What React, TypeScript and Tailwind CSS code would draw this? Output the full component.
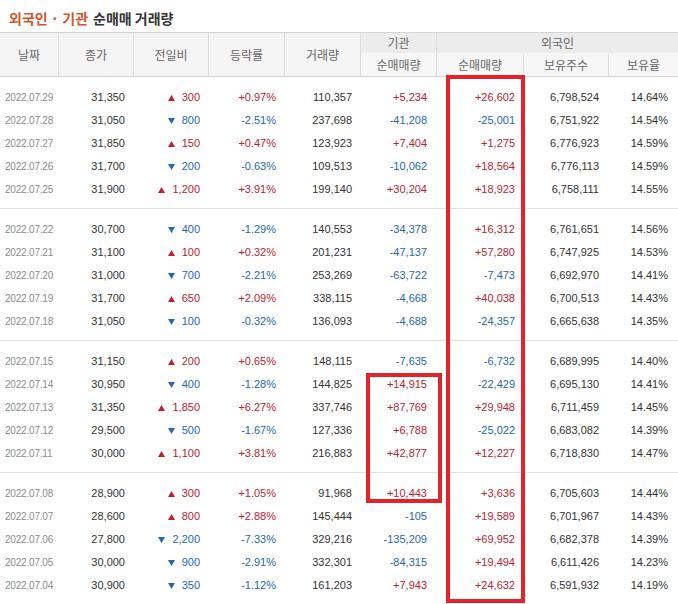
import React from "react";

type Row = [string, string, "u" | "d", string, string, string, string, string, string, string];

const groups: Row[][] = [
  [
    ["2022.07.29", "31,350", "u", "300", "+0.97%", "110,357", "+5,234", "+26,602", "6,798,524", "14.64%"],
    ["2022.07.28", "31,050", "d", "800", "-2.51%", "237,698", "-41,208", "-25,001", "6,751,922", "14.54%"],
    ["2022.07.27", "31,850", "u", "150", "+0.47%", "123,923", "+7,404", "+1,275", "6,776,923", "14.59%"],
    ["2022.07.26", "31,700", "d", "200", "-0.63%", "109,513", "-10,062", "+18,564", "6,776,113", "14.59%"],
    ["2022.07.25", "31,900", "u", "1,200", "+3.91%", "199,140", "+30,204", "+18,923", "6,758,111", "14.55%"],
  ],
  [
    ["2022.07.22", "30,700", "d", "400", "-1.29%", "140,553", "-34,378", "+16,312", "6,761,651", "14.56%"],
    ["2022.07.21", "31,100", "u", "100", "+0.32%", "201,231", "-47,137", "+57,280", "6,747,925", "14.53%"],
    ["2022.07.20", "31,000", "d", "700", "-2.21%", "253,269", "-63,722", "-7,473", "6,692,970", "14.41%"],
    ["2022.07.19", "31,700", "u", "650", "+2.09%", "338,115", "-4,668", "+40,038", "6,700,513", "14.43%"],
    ["2022.07.18", "31,050", "d", "100", "-0.32%", "136,093", "-4,688", "-24,357", "6,665,638", "14.35%"],
  ],
  [
    ["2022.07.15", "31,150", "u", "200", "+0.65%", "148,115", "-7,635", "-6,732", "6,689,995", "14.40%"],
    ["2022.07.14", "30,950", "d", "400", "-1.28%", "144,825", "+14,915", "-22,429", "6,695,130", "14.41%"],
    ["2022.07.13", "31,350", "u", "1,850", "+6.27%", "337,746", "+87,769", "+29,948", "6,711,459", "14.45%"],
    ["2022.07.12", "29,500", "d", "500", "-1.67%", "127,336", "+6,788", "-25,022", "6,683,082", "14.39%"],
    ["2022.07.11", "30,000", "u", "1,100", "+3.81%", "216,883", "+42,877", "+12,227", "6,718,830", "14.47%"],
  ],
  [
    ["2022.07.08", "28,900", "u", "300", "+1.05%", "91,968", "+10,443", "+3,636", "6,705,603", "14.44%"],
    ["2022.07.07", "28,600", "u", "800", "+2.88%", "145,444", "-105", "+19,589", "6,701,967", "14.43%"],
    ["2022.07.06", "27,800", "d", "2,200", "-7.33%", "329,216", "-135,209", "+69,952", "6,682,378", "14.39%"],
    ["2022.07.05", "30,000", "d", "900", "-2.91%", "332,301", "-84,315", "+19,494", "6,611,426", "14.23%"],
    ["2022.07.04", "30,900", "d", "350", "-1.12%", "161,203", "+7,943", "+24,632", "6,591,932", "14.19%"],
  ],
];

const RED = "text-[#b8232f]";
const BLUE = "text-[#2867b2]";
const cols = "grid grid-cols-[59px_75px_75px_76px_76px_76px_87px_85px_69px]";

function signColor(v: string) {
  return v.startsWith("+") ? RED : v.startsWith("-") ? BLUE : "text-[#333]";
}

function Tri({ dir }: { dir: "u" | "d" }) {
  return dir === "u" ? (
    <svg width="7" height="6" viewBox="0 0 7 6">
      <polygon points="3.5,0 7,6 0,6" fill="#b8232f" />
    </svg>
  ) : (
    <svg width="7" height="6" viewBox="0 0 7 6">
      <polygon points="0,0 7,0 3.5,6" fill="#2867b2" />
    </svg>
  );
}

function DataRow({ r }: { r: Row }) {
  const num = "h-[23px] flex items-center justify-end pr-[9px] text-[11px]";
  return (
    <div className={cols}>
      <div className="h-[23px] flex items-center pl-[5px] text-[10px] tracking-[-0.2px] text-[#8c8c8c]">{r[0]}</div>
      <div className={`${num} text-[#333]`}>{r[1]}</div>
      <div className={`${num} gap-[7px] ${r[2] === "u" ? RED : BLUE}`}>
        <Tri dir={r[2]} />
        <span>{r[3]}</span>
      </div>
      <div className={`${num} ${signColor(r[4])}`}>{r[4]}</div>
      <div className={`${num} text-[#333]`}>{r[5]}</div>
      <div className={`${num} pr-[10px] ${signColor(r[6])}`}>{r[6]}</div>
      <div className={`${num} ${signColor(r[7])}`}>{r[7]}</div>
      <div className={`${num} pr-[10px] text-[#333]`}>{r[8]}</div>
      <div className={`${num} pr-[10px] text-[#333]`}>{r[9]}</div>
    </div>
  );
}

export default function App() {
  const hdr = "flex items-center justify-center text-[12px] text-[#666] border-r border-[#dcdcdc]";
  return (
    <div
      className="relative w-[678px] h-[604px] overflow-hidden bg-white"
      style={{ fontFamily: '"Liberation Sans", "Noto Sans CJK KR", sans-serif' }}
    >
      <div className="h-[32px] flex items-center pl-[9px] pt-[4px] text-[14px] font-bold" style={{ fontFamily: '"Noto Sans CJK KR", sans-serif' }}>
        <span className="text-[#d4542c]">외국인 · 기관</span>
        <span className="ml-[5px] text-[#333]">순매매 거래량</span>
      </div>
      <div
        className={`${cols} grid-rows-[21px_22px] border-t border-b border-[#d4d4d4]`}
        style={{ fontFamily: '"Noto Sans CJK KR", sans-serif' }}
      >
        <div className={`${hdr} row-span-2 bg-[#f5f5f5]`}>날짜</div>
        <div className={`${hdr} row-span-2 bg-[#f5f5f5]`}>종가</div>
        <div className={`${hdr} row-span-2 bg-[#f5f5f5]`}>전일비</div>
        <div className={`${hdr} row-span-2 bg-[#f5f5f5]`}>등락률</div>
        <div className={`${hdr} row-span-2 bg-[#f5f5f5]`}>거래량</div>
        <div className={`${hdr} bg-[#ececec] border-b border-b-[#f8f8f8]`}>기관</div>
        <div className={`${hdr} col-span-3 bg-[#ececec] border-r-0 border-b border-b-[#f8f8f8]`}>외국인</div>
        <div className={`${hdr} bg-[#f7f7f7]`}>순매매량</div>
        <div className={`${hdr} bg-[#f7f7f7]`}>순매매량</div>
        <div className={`${hdr} bg-[#f7f7f7]`}>보유주수</div>
        <div className={`${hdr} bg-[#f7f7f7] border-r-0`}>보유율</div>
      </div>
      {groups.map((g, i) => (
        <div key={i} className={`pt-[9px] pb-[7px] ${i < groups.length - 1 ? "border-b border-[#e2e2e2]" : ""}`}>
          {g.map((r) => (
            <DataRow key={r[0]} r={r} />
          ))}
        </div>
      ))}
      <div className="absolute left-[446px] top-[75px] w-[79px] h-[528px] border-[4px] border-[#e5222b]" />
      <div className="absolute left-[366px] top-[373px] w-[76px] h-[130px] border-[4px] border-[#e5222b]" />
    </div>
  );
}
